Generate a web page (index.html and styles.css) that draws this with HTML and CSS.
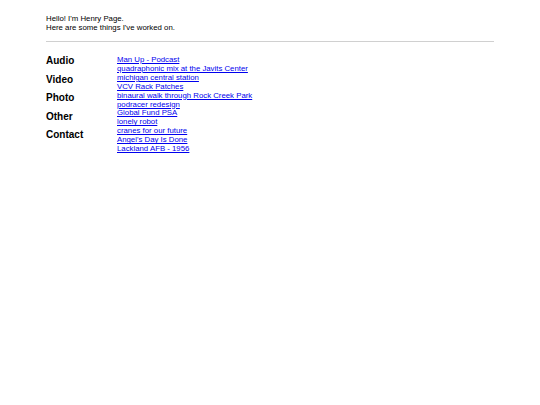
FILE: index.html
```html
<!DOCTYPE html>
<html>
<head>
<meta charset="utf-8">
<link rel="stylesheet" href="styles.css">
</head>
<body>
<div class="page">
  <header class="intro">
    <p>Hello! I'm Henry Page.</p>
    <p>Here are some things I've worked on.</p>
  </header>
  <hr class="rule">
  <main class="content">
    <nav class="nav">
      <div class="nav-item">Audio</div>
      <div class="nav-item">Video</div>
      <div class="nav-item">Photo</div>
      <div class="nav-item">Other</div>
      <div class="nav-item">Contact</div>
    </nav>
    <ul class="links">
      <li><a href="#">Man Up - Podcast</a></li>
      <li><a href="#">quadraphonic mix at the Javits Center</a></li>
      <li><a href="#">michigan central station</a></li>
      <li><a href="#">VCV Rack Patches</a></li>
      <li><a href="#">binaural walk through Rock Creek Park</a></li>
      <li><a href="#">podracer redesign</a></li>
      <li><a href="#">Global Fund PSA</a></li>
      <li><a href="#">lonely robot</a></li>
      <li><a href="#">cranes for our future</a></li>
      <li><a href="#">Angel's Day Is Done</a></li>
      <li><a href="#">Lackland AFB - 1956</a></li>
    </ul>
  </main>
</div>
</body>
</html>
```
FILE: styles.css
```css
html, body {
  margin: 0;
  padding: 0;
  background: #fff;
}
body {
  font-family: "Liberation Sans", Arial, sans-serif;
  color: #000;
}
.page {
  padding: 14px 46px;
}
.intro p {
  margin: 0;
  font-size: 7.8px;
  line-height: 9px;
}
.rule {
  border: 0;
  height: 1px;
  background: #d0d0d0;
  margin: 9px 0 14px;
}
.content {
  display: flex;
}
.nav {
  width: 71px;
  margin-top: -4px;
}
.nav-item {
  font-size: 10px;
  font-weight: bold;
  line-height: 18.6px;
}
.links {
  list-style: none;
  margin: 0;
  padding: 0;
}
.links li {
  font-size: 7.8px;
  line-height: 8.9px;
}
.links a {
  color: #0000ee;
  text-decoration: underline;
}
```
